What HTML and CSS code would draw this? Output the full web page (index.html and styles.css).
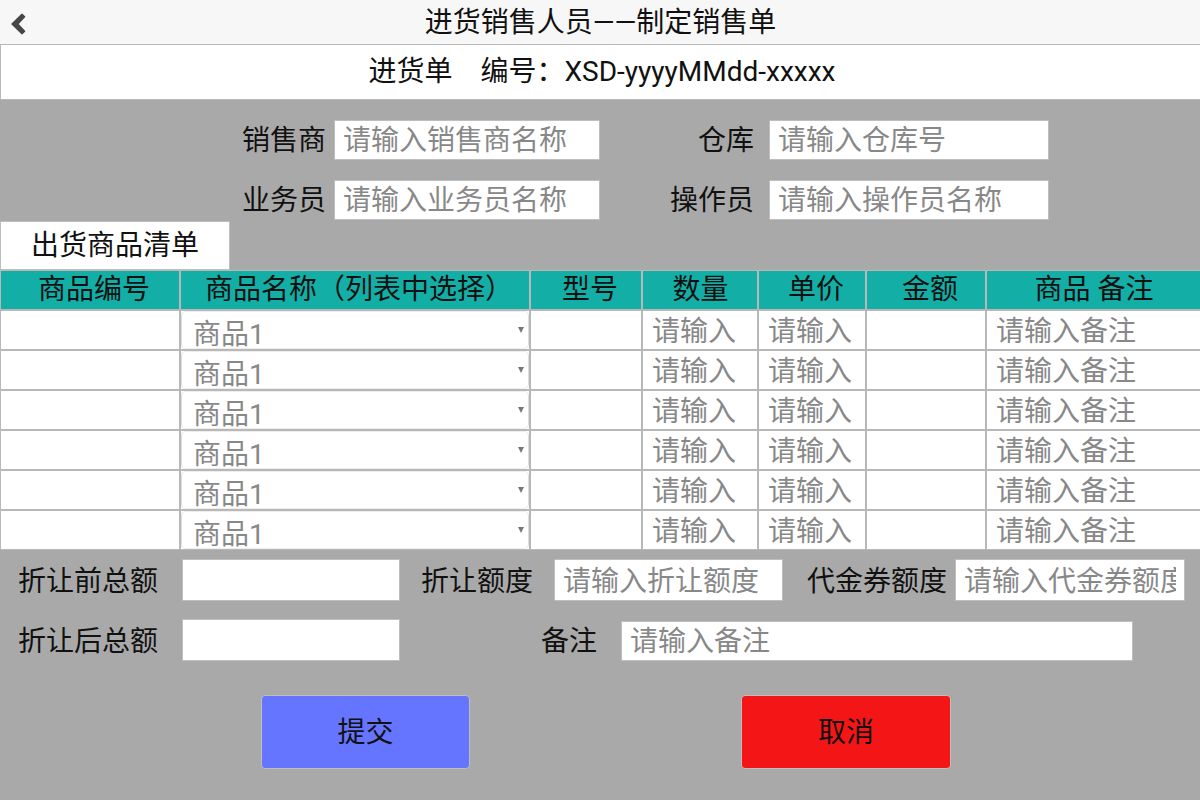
FILE: index.html
```html
<!DOCTYPE html>
<html lang="zh-CN">
<head>
<meta charset="utf-8">
<meta name="viewport" content="width=device-width, initial-scale=1">
<title>制定销售单</title>
<link rel="stylesheet" href="styles.css">
</head>
<body>
<header class="topbar">
  <button class="back" type="button" aria-label="返回">
    <svg width="16" height="22" viewBox="0 0 16 22" aria-hidden="true"><path d="M11 1.2 L13.6 3.8 L6.8 11 L13.6 18.2 L11 20.8 L1 11 Z" fill="#474747" stroke="#474747" stroke-width="1.4" stroke-linejoin="round"/></svg>
  </button>
  <h1 class="topbar-title">进货销售人员——制定销售单</h1>
</header>
<form class="sheet">
  <h2 class="doc-title">进货单　编号：XSD-yyyyMMdd-xxxxx</h2>

  <section class="fields">
    <label class="label" for="seller">销售商</label>
    <input class="field" id="seller" type="text" placeholder="请输入销售商名称">
    <label class="label label-wide" for="store">仓库</label>
    <input class="field" id="store" type="text" placeholder="请输入仓库号">
    <label class="label label-second" for="clerk">业务员</label>
    <input class="field" id="clerk" type="text" placeholder="请输入业务员名称">
    <label class="label label-wide" for="operator">操作员</label>
    <input class="field" id="operator" type="text" placeholder="请输入操作员名称">
  </section>

  <h3 class="list-title">出货商品清单</h3>

  <table class="goods">
    <colgroup><col class="c-id"><col class="c-name"><col class="c-model"><col class="c-count"><col class="c-price"><col class="c-sum"><col></colgroup>
    <thead>
      <tr><th>商品编号</th><th>商品名称（列表中选择）</th><th>型号</th><th class="even">数量</th><th>单价</th><th>金额</th><th class="even">商品 备注</th></tr>
    </thead>
    <tbody>
      <tr><td></td><td><div class="pick"><select aria-label="商品名称"><option>商品1</option></select></div></td><td></td><td><input type="text" aria-label="数量" placeholder="请输入"></td><td><input type="text" aria-label="单价" placeholder="请输入"></td><td></td><td><input type="text" aria-label="商品备注" placeholder="请输入备注"></td></tr>
      <tr><td></td><td><div class="pick"><select aria-label="商品名称"><option>商品1</option></select></div></td><td></td><td><input type="text" aria-label="数量" placeholder="请输入"></td><td><input type="text" aria-label="单价" placeholder="请输入"></td><td></td><td><input type="text" aria-label="商品备注" placeholder="请输入备注"></td></tr>
      <tr><td></td><td><div class="pick"><select aria-label="商品名称"><option>商品1</option></select></div></td><td></td><td><input type="text" aria-label="数量" placeholder="请输入"></td><td><input type="text" aria-label="单价" placeholder="请输入"></td><td></td><td><input type="text" aria-label="商品备注" placeholder="请输入备注"></td></tr>
      <tr><td></td><td><div class="pick"><select aria-label="商品名称"><option>商品1</option></select></div></td><td></td><td><input type="text" aria-label="数量" placeholder="请输入"></td><td><input type="text" aria-label="单价" placeholder="请输入"></td><td></td><td><input type="text" aria-label="商品备注" placeholder="请输入备注"></td></tr>
      <tr><td></td><td><div class="pick"><select aria-label="商品名称"><option>商品1</option></select></div></td><td></td><td><input type="text" aria-label="数量" placeholder="请输入"></td><td><input type="text" aria-label="单价" placeholder="请输入"></td><td></td><td><input type="text" aria-label="商品备注" placeholder="请输入备注"></td></tr>
      <tr><td></td><td><div class="pick"><select aria-label="商品名称"><option>商品1</option></select></div></td><td></td><td><input type="text" aria-label="数量" placeholder="请输入"></td><td><input type="text" aria-label="单价" placeholder="请输入"></td><td></td><td><input type="text" aria-label="商品备注" placeholder="请输入备注"></td></tr>
    </tbody>
  </table>

  <section class="totals">
    <div class="totals-row">
      <label class="label label-total" for="before">折让前总额</label>
      <input class="field field-tall" id="before" type="text">
      <label class="label label-discount" for="discount">折让额度</label>
      <input class="field field-tall" id="discount" type="text" placeholder="请输入折让额度">
      <label class="label" for="voucher">代金券额度</label>
      <input class="field field-tall" id="voucher" type="text" placeholder="请输入代金券额度">
    </div>
    <div class="totals-row totals-row-note">
      <label class="label label-total" for="after">折让后总额</label>
      <input class="field field-tall" id="after" type="text">
      <label class="label label-total" for="note">备注</label>
      <input class="field" id="note" type="text" placeholder="请输入备注">
    </div>
  </section>

  <div class="actions">
    <button class="action submit" type="submit">提交</button>
    <button class="action cancel" type="reset">取消</button>
  </div>
</form>
</body>
</html>
```

FILE: styles.css
```css
* { box-sizing: border-box; }

body {
  margin: 0;
  min-height: 100vh;
  background: #a9a9a9;
  color: #111;
  font: 28px/40px Roboto, "Noto Sans CJK SC", sans-serif;
}

button, input, select { margin: 0; color: inherit; font: inherit; }

h1, h2, h3 { margin: 0; font-size: 28px; font-weight: 400; }

.topbar {
  display: grid;
  grid-template-columns: 40px 1fr 40px;
  align-items: center;
  height: 44px;
  background: #f7f7f7;
}

.back {
  display: flex;
  align-items: center;
  height: 44px;
  padding: 3px 0 0 11px;
  border: 0;
  background: none;
}

.topbar-title { padding: 2px 0 0 1px; text-align: center; }

.doc-title {
  height: 56px;
  padding: 7px 0 7px 3px;
  border: 1px solid #b8b8b8;
  border-right: 0;
  background: #fff;
  text-align: center;
}

.fields {
  display: grid;
  grid-template-columns: 334fr 266fr 169fr 280fr 151fr;
  row-gap: 20px;
  padding: 20px 0 1px;
}

.label-second { grid-column: 1; }

.label {
  height: 40px;
  padding-right: 8px;
  line-height: 42px;
  text-align: right;
  white-space: nowrap;
}

.label-wide { padding-right: 15px; }
.label-total { padding-right: 24px; }
.label-discount { padding-right: 21px; }

.field {
  width: 100%;
  min-width: 0;
  height: 40px;
  padding: 2px 8px 0;
  border: 1px solid #bebebe;
  border-radius: 0;
  background: #fff;
}

.field-tall { height: 42px; }

::placeholder { color: #888; opacity: 1; }

.list-title {
  width: 230px;
  height: 49px;
  padding: 4px 0;
  border: 1px solid #bebebe;
  background: #fff;
  text-align: center;
}

.goods {
  width: 100%;
  table-layout: fixed;
  border-collapse: separate;
  border-spacing: 0;
}

.c-id { width: 15%; }
.c-name { width: 350px; }
.c-model { width: 112px; }
.c-count { width: 116px; }
.c-price { width: 9%; }
.c-sum { width: 10%; }

.goods th, .goods td {
  height: 40px;
  padding: 0;
  border: 1px solid #b8b8b8;
}

.goods th:last-child, .goods td:last-child { border-right: 0; }

.goods th {
  padding-left: 8px;
  background: #13afa7;
  font-weight: 400;
  line-height: 38px;
  white-space: nowrap;
}

.goods .even { padding-left: 1px; }

.goods td { background: #fff; }

.goods input {
  display: block;
  width: 100%;
  height: 38px;
  padding: 3px 8px 0 9px;
  border: 0;
  background: none;
}

.pick { position: relative; }

.pick::after {
  content: "";
  position: absolute;
  top: 16px;
  right: 5px;
  border: 3px solid transparent;
  border-top: 6px solid #777;
  border-bottom: 0;
  pointer-events: none;
}

.pick select {
  display: block;
  width: 100%;
  height: 38px;
  padding: 3px 11px 0;
  border: 1px solid;
  border-color: #eee #ddd;
  border-radius: 5px;
  appearance: none;
  background: #fff;
  color: #888;
}

.totals {
  display: grid;
  row-gap: 18px;
  padding-top: 9px;
}

.totals-row {
  display: grid;
  grid-template-columns: 182fr 218fr 154fr 229fr 172fr 230fr 15fr;
  align-items: end;
}

.totals-row-note { grid-template-columns: 182fr 218fr 221fr 512fr 67fr; }

.actions {
  display: grid;
  grid-template-columns: 261fr 209fr 271fr 210fr 249fr;
  padding: 34px 0 31px;
}

.action {
  height: 74px;
  padding: 2px 0 0;
  border: 1px solid #bebebe;
  border-radius: 4px;
}

.submit { grid-column: 2; background: #6675ff; }
.cancel { grid-column: 4; background: #f41616; }
```
